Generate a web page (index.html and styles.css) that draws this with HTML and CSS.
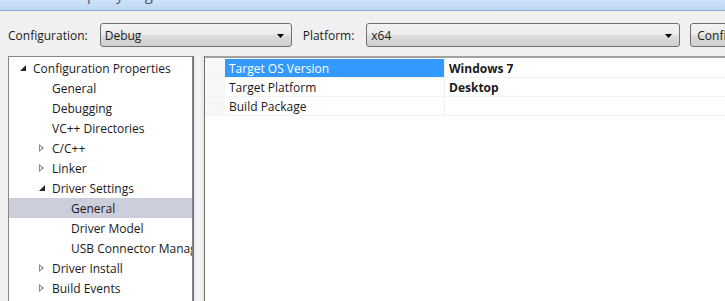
FILE: index.html
```html
<!DOCTYPE html>
<html>

<head>
  <title>Property Pages</title>
  <link rel="stylesheet" href="styles.css">
</head>

<body>
  <div class="titlebar">
    <span>Driver Property Pages</span>
  </div>
  <section class="toolbar">
    <label>Configuration:</label>
    <div class="combo combo-config">
      <span>Debug</span>
      <svg class="drop" width="7" height="4" viewBox="0 0 7 4"><path d="M0 0h7L3.5 4z" fill="#000"/></svg>
    </div>
    <label class="platform-label">Platform:</label>
    <div class="combo combo-platform">
      <span>x64</span>
      <svg class="drop" width="7" height="4" viewBox="0 0 7 4"><path d="M0 0h7L3.5 4z" fill="#000"/></svg>
    </div>
    <button class="btn">Configuration Manager...</button>
  </section>

  <section class="main">
    <div class="tree">
      <div class="node lvl0"><span class="tog open"></span>Configuration Properties</div>
      <div class="node lvl1"><span class="tog"></span>General</div>
      <div class="node lvl1"><span class="tog"></span>Debugging</div>
      <div class="node lvl1"><span class="tog"></span>VC++ Directories</div>
      <div class="node lvl1"><span class="tog closed"></span>C/C++</div>
      <div class="node lvl1"><span class="tog closed"></span>Linker</div>
      <div class="node lvl1"><span class="tog open"></span>Driver Settings</div>
      <div class="node lvl2 selected"><span class="tog"></span>General</div>
      <div class="node lvl2"><span class="tog"></span>Driver Model</div>
      <div class="node lvl2"><span class="tog"></span>USB Connector Management</div>
      <div class="node lvl1"><span class="tog closed"></span>Driver Install</div>
      <div class="node lvl1"><span class="tog closed"></span>Build Events</div>
    </div>
    <div class="splitter"></div>
    <div class="grid">
      <div class="row active">
        <div class="gutter"></div>
        <div class="name">Target OS Version</div>
        <div class="value">Windows 7</div>
      </div>
      <div class="row">
        <div class="gutter"></div>
        <div class="name">Target Platform</div>
        <div class="value">Desktop</div>
      </div>
      <div class="row">
        <div class="gutter"></div>
        <div class="name">Build Package</div>
        <div class="value"></div>
      </div>
    </div>
  </section>
</body>

</html>
```

FILE: styles.css
```css
* {
  margin: 0;
  padding: 0;
  box-sizing: border-box;
}

:root {
  --panel-bg: #f0f0f0;
  --border: #828790;
  --select: #3399ff;
  --tree-select: #cccedb;
}

body {
  width: 725px;
  height: 301px;
  overflow: hidden;
  background-color: var(--panel-bg);
  font-family: "Open Sans", "Noto Sans", sans-serif;
  font-size: 12px;
  color: #1a1a1a;
}

.titlebar {
  height: 11px;
  overflow: hidden;
  background: linear-gradient(#cfe3f8, #bcd7f2);
  border-bottom: 1px solid #8ea9c6;
  padding-left: 16px;
}

.titlebar span {
  display: block;
  margin-top: -15px;
  font-size: 15px;
  line-height: 18px;
  color: #4a5a70;
  white-space: nowrap;
}

.toolbar {
  display: flex;
  align-items: center;
  height: 45px;
  padding-left: 8px;
  padding-top: 3px;
}

.toolbar > * {
  flex-shrink: 0;
}

.toolbar label {
  margin-right: 12px;
}

.platform-label {
  margin-left: 11px;
}

.combo {
  display: flex;
  align-items: center;
  justify-content: space-between;
  height: 24px;
  padding: 0 7px 0 4px;
  border: 1px solid #707070;
  border-radius: 3px;
  background: linear-gradient(#f3f3f3 0%, #ebebeb 50%, #dddddd 51%, #cfcfcf 100%);
}

.combo-config {
  width: 192px;
}

.combo-platform {
  width: 314px;
  margin-right: 10px;
}

.drop {
  margin-top: 1px;
}

.btn {
  height: 24px;
  padding: 0 6px;
  border: 1px solid #707070;
  border-radius: 3px;
  background: linear-gradient(#f3f3f3 0%, #ebebeb 50%, #dddddd 51%, #cfcfcf 100%);
  font: inherit;
  color: inherit;
  white-space: nowrap;
  text-align: left;
}

.main {
  display: flex;
  height: 245px;
  padding-left: 8px;
}

.tree {
  width: 185px;
  background-color: #fff;
  border: 1px solid var(--border);
  border-bottom: none;
  padding-top: 1px;
  overflow: hidden;
}

.node {
  display: flex;
  align-items: center;
  height: 20px;
  white-space: nowrap;
  overflow: hidden;
}

.lvl0 { padding-left: 8px; }
.lvl1 { padding-left: 27px; }
.lvl2 { padding-left: 46px; }

.node.selected {
  background-color: var(--tree-select);
}

.tog {
  width: 16px;
  height: 20px;
  flex-shrink: 0;
  position: relative;
}

.tog.open::before {
  content: "";
  position: absolute;
  left: 3px;
  top: 7px;
  width: 0;
  height: 0;
  border-left: 6px solid transparent;
  border-bottom: 6px solid #262626;
}

.tog.closed::before {
  content: "";
  position: absolute;
  left: 3px;
  top: 6px;
  width: 0;
  height: 0;
  border-top: 4px solid transparent;
  border-bottom: 4px solid transparent;
  border-left: 5px solid #8a8a8a;
}

.tog.closed::after {
  content: "";
  position: absolute;
  left: 4px;
  top: 8px;
  width: 0;
  height: 0;
  border-top: 2px solid transparent;
  border-bottom: 2px solid transparent;
  border-left: 2px solid #fff;
}

.splitter {
  width: 12px;
  background: linear-gradient(90deg, #6f6f6f 0, #6f6f6f 1px, #ececec 1px, #f7f7f7 6px, #e6e6e6 11px, #6f6f6f 11px);
}

.grid {
  flex: 1;
  background-color: #fff;
  border-top: 2px solid #a0a0a0;
  padding-top: 1px;
}

.row {
  display: flex;
  height: 19px;
  line-height: 19px;
  border-bottom: 1px solid #f3f3f3;
}

.gutter {
  width: 20px;
  background-color: #f7f7f7;
}

.name {
  width: 220px;
  padding-left: 4px;
  border-right: 1px solid #f0f0f0;
  white-space: nowrap;
}

.row.active .name {
  background-color: var(--select);
  color: #fff;
}

.value {
  flex: 1;
  padding-left: 4px;
  font-weight: bold;
}
```
